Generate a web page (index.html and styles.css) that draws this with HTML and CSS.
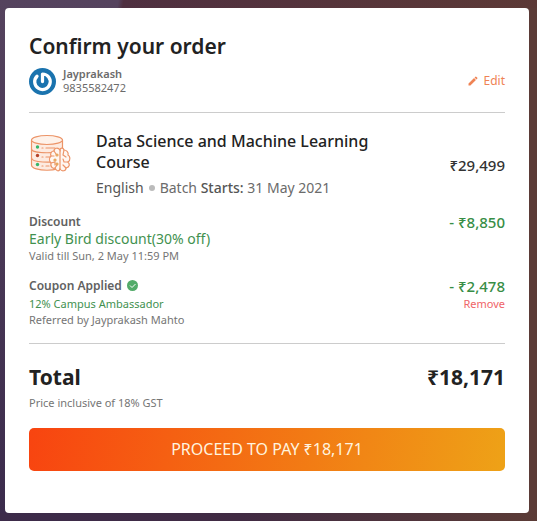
FILE: index.html
```html
<!DOCTYPE html>
<html lang="en">
<head>
<meta charset="utf-8">
<meta name="viewport" content="width=device-width, initial-scale=1">
<title>Confirm your order</title>
<link rel="stylesheet" href="styles.css">
</head>
<body>
<main class="card">
  <h1 class="title">Confirm your order</h1>
  <section class="user">
    <svg class="avatar" viewBox="0 0 54 54" aria-hidden="true">
      <circle cx="27" cy="27" r="27" fill="#1a73ae"/>
      <path d="M27 27V12A15.500 15.500 0 1 1 16 16.500" fill="none" stroke="#fff" stroke-width="6.500" stroke-linecap="round" stroke-linejoin="round"/>
    </svg>
    <div class="person">
      <p class="name">Jayprakash</p>
      <p class="phone">9835582472</p>
    </div>
    <a class="edit" href="#edit">
      <svg class="pencil" viewBox="0 0 24 24" aria-hidden="true"><path d="M3 17.2V21h3.8L17.900 9.900l-3.800-3.800zM20.700 7a1 1 0 0 0 0-1.400l-2.300-2.300a1 1 0 0 0-1.400 0l-1.900 1.800 3.800 3.800z" fill="currentColor"/></svg>
      Edit
    </a>
  </section>
  <section class="course">
    <svg class="course-icon" viewBox="0 0 42 40" fill="none" stroke="#ec9468" stroke-width="1.2" stroke-linecap="round" aria-hidden="true">
      <path d="M2.500 6V31C2.500 38 33.500 38 33.500 31V6" fill="#fdebe1"/>
      <ellipse cx="18" cy="6" rx="15.500" ry="4.500" fill="#fef2ea"/>
      <path d="M2.500 15C2.500 20 33.500 20 33.500 15M2.500 24C2.500 29 25 28.500 25 27.500M13 14h1M17 14h9M13 23h1M17 23h5M13 32h1M17 32h3"/>
      <circle cx="8.500" cy="13" r="1.700" fill="#35b56b" stroke="none"/>
      <circle cx="8.500" cy="21.500" r="1.700" fill="#b5442b" stroke="none"/>
      <circle cx="8.500" cy="30.500" r="1.700" fill="#35b56b" stroke="none"/>
      <path d="M31 16C29 13 25 14 25 17C22 17 21 20 22 22C20 24 20 27 22 29C21 33 24 35 26 34C27 37 30 38 31 35C33 38 37 37 37 34C41 33 41 30 39 28C42 26 41 22 39 21C40 18 37 16 35 16C34 13 31 14 31 16Z" fill="#fff7f2"/>
      <path d="M31 16V35M25 17L27 20M22 22H25M22 29L26 28V31M26 34L28 31M35 16L34 21L37 23M39 28H35L34 25M37 34L34 31"/>
      <g stroke="#e5a052"><circle cx="28" cy="21" r="1"/><circle cx="26" cy="26" r="1"/><circle cx="28" cy="30" r="1"/></g>
    </svg>
    <div class="course-info">
      <h2 class="course-name">Data Science and Machine Learning Course</h2>
      <p class="batch"><span class="lang">English</span><span class="dot"></span><span>Batch <b>Starts:</b> 31 May 2021</span></p>
    </div>
    <p class="price">₹29,499</p>
  </section>
  <section class="line discount">
    <div>
      <h3 class="label">Discount</h3>
      <p class="offer">Early Bird discount(30% off)</p>
      <p class="note">Valid till Sun, 2 May 11:59 PM</p>
    </div>
    <p class="saving">- ₹8,850</p>
  </section>
  <section class="line coupon">
    <div>
      <h3 class="label">Coupon Applied
        <svg class="check" viewBox="0 0 22 22" aria-hidden="true"><circle cx="11" cy="11" r="11" fill="#52ab69"/><path d="M6 11l4 4 7-7" fill="none" stroke="#fff" stroke-width="2"/></svg>
      </h3>
      <p class="note code">12% Campus Ambassador</p>
      <p class="note">Referred by Jayprakash Mahto</p>
    </div>
    <div class="amount">
      <p class="saving">- ₹2,478</p>
      <button class="remove" type="button">Remove</button>
    </div>
  </section>
  <section class="total">
    <h2 class="total-label">Total</h2>
    <p class="total-price">₹18,171</p>
  </section>
  <p class="note tax">Price inclusive of 18% GST</p>
  <button class="pay" type="button">PROCEED TO PAY ₹18,171</button>
</main>
</body>
</html>
```
FILE: styles.css
```css
* { box-sizing: border-box; }
body, h1, h2, h3, p { margin: 0; }
body {
  min-height: 100vh;
  padding: 8px 8px 8px 5px;
  font-family: "Noto Sans", sans-serif;
  color: #222;
  background: linear-gradient(100deg, transparent 22%, #4e2f40 23%, #5c3936 100%) top / 100% 8px no-repeat,
    linear-gradient(90deg, #3c2b4a 0%, #412b43 45%, #5b3b36 100%) bottom / 100% 8px no-repeat,
    linear-gradient(90deg, transparent 50%, #5b3b37 50%),
    linear-gradient(180deg, #55435e, #3b2b4c);
}
.card {
  padding: 24px 24px 42px;
  background: #fff;
  border-radius: 4px;
}
.title { font-size: 21px; line-height: 28px; font-weight: 600; }
.user {
  display: flex;
  align-items: center;
  padding: 7px 0 17px;
  border-bottom: 1px solid #ccc;
}
.avatar { width: 27px; height: 27px; }
.person { margin-left: 7px; flex: 1; font-size: 11px; line-height: 14px; color: #6b6b6b; }
.name { font-weight: 600; }
.edit {
  display: flex;
  align-items: center;
  gap: 5px;
  font-size: 12px;
  line-height: 18px;
  color: #ef8354;
  text-decoration: none;
}
.pencil { width: 12px; height: 12px; }
.course { display: flex; align-items: center; padding-top: 18px; }
.course-icon { width: 42px; height: 40px; align-self: flex-start; margin-top: 3px; }
.course-info { flex: 1; margin-left: 25px; padding-right: 64px; }
.course-name { font-size: 16px; line-height: 21px; font-weight: 500; }
.batch {
  display: flex;
  align-items: center;
  gap: 5px;
  margin-top: 5px;
  font-size: 14px;
  line-height: 20px;
  color: #6b6b6b;
}
.batch b { font-weight: 500; color: #555; }
.lang { color: #555; }
.dot { width: 6px; height: 6px; border-radius: 50%; background: #bbb; }
.price { font-size: 15px; line-height: 20px; font-weight: 500; color: #333; }
.line { display: flex; justify-content: space-between; }
.discount { margin-top: 15px; }
.coupon { margin-top: 13px; padding-bottom: 15px; border-bottom: 1px solid #ccc; }
.label {
  display: flex;
  align-items: center;
  gap: 5px;
  font-size: 12px;
  line-height: 17px;
  font-weight: 600;
  color: #616161;
}
.check { width: 11px; height: 11px; }
.offer { font-size: 14px; line-height: 18px; color: #42914f; }
.note { font-size: 11px; line-height: 16px; color: #757575; }
.code { margin-top: 2px; color: #42914f; }
.saving { font-size: 15px; line-height: 18px; font-weight: 500; color: #388e46; }
.amount { display: flex; flex-direction: column; align-items: flex-end; }
.remove {
  padding: 0;
  border: 0;
  background: none;
  font: 11px/18px "Noto Sans", sans-serif;
  color: #ef6468;
}
.total {
  display: flex;
  justify-content: space-between;
  margin-top: 18px;
  line-height: 30px;
}
.total-label, .total-price { font-size: 21px; font-weight: 700; }
.tax { margin-top: 3px; }
.pay {
  width: 100%;
  margin-top: 17px;
  padding: 10px;
  border: 0;
  border-radius: 5px;
  font: 16px/23px "Noto Sans", sans-serif;
  color: #fff3df;
  background: linear-gradient(100deg, #f84410, #eea217);
}
```
